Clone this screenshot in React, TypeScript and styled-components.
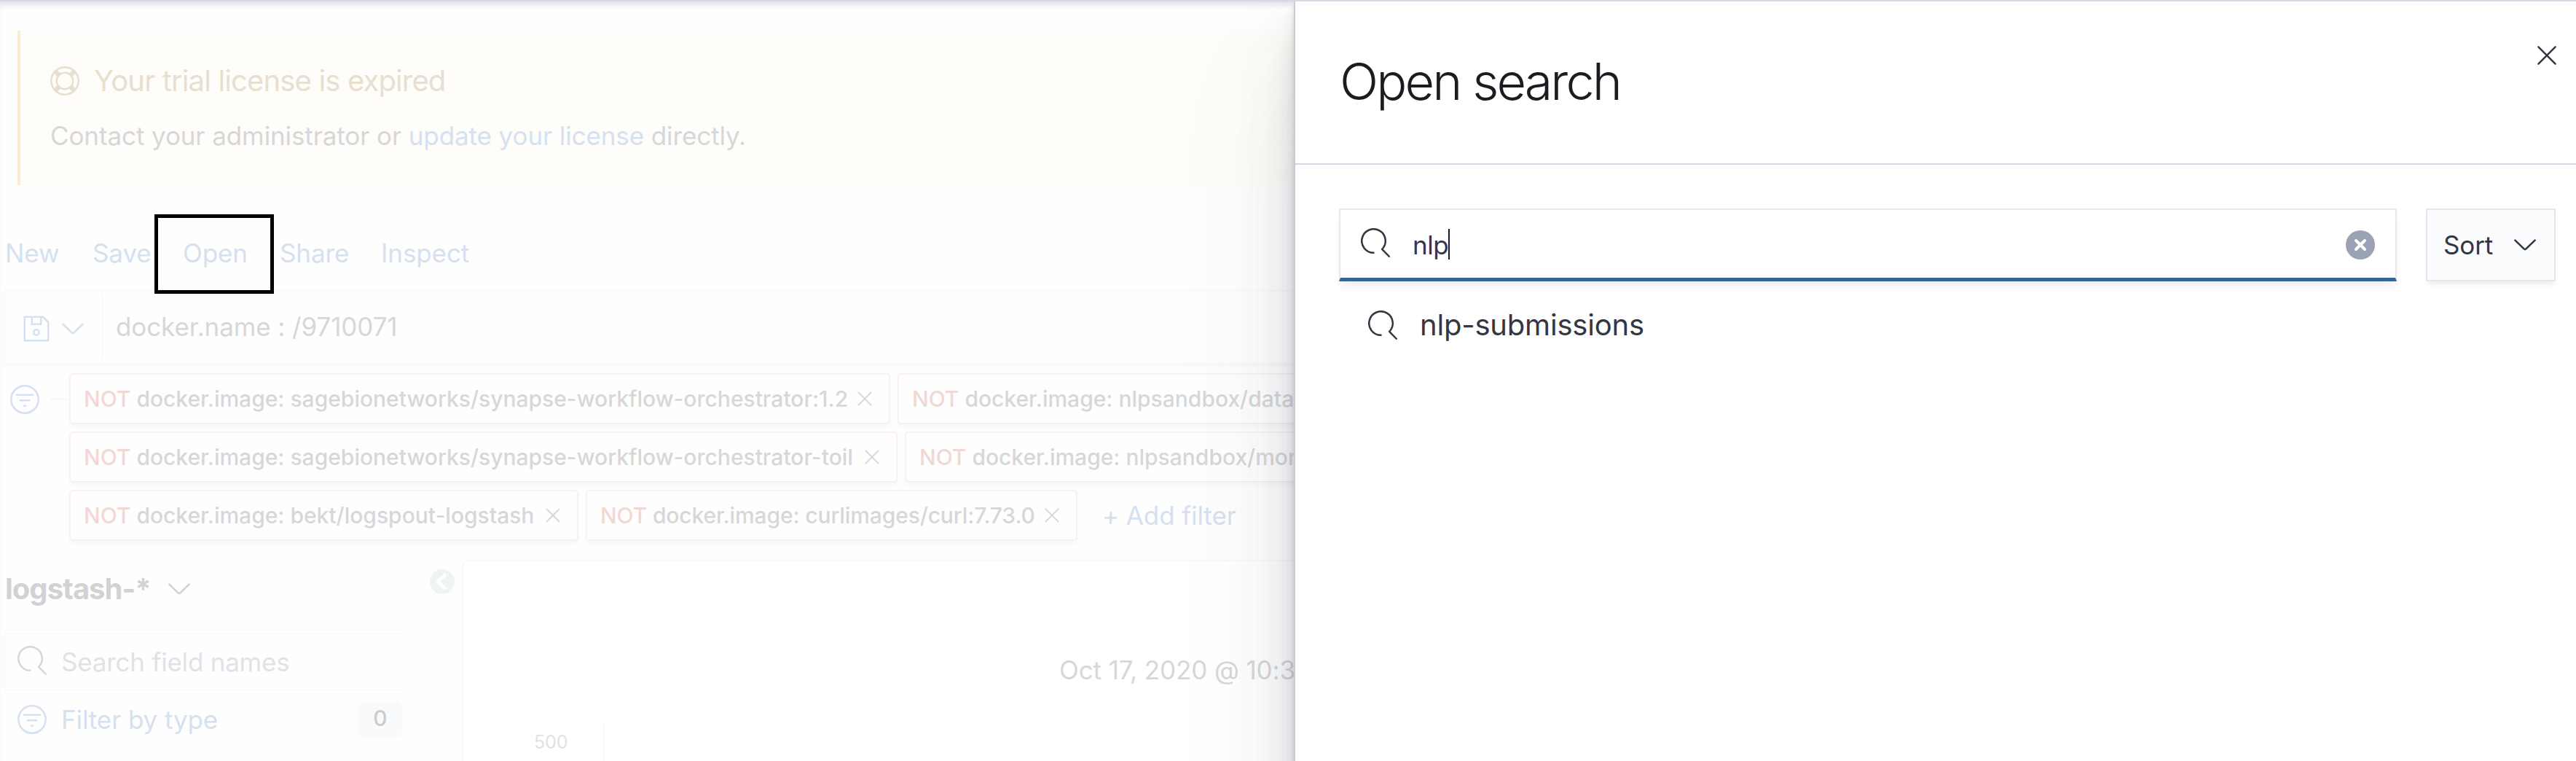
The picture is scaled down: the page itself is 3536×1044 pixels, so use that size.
import React from "react";
import styled, { createGlobalStyle, css } from "styled-components";

const link = "#d5e1f0";
const text = "#d7d7d9";
const ink = "#343741";

const GlobalStyle = createGlobalStyle`
  *, *::before, *::after { box-sizing: border-box; }
  body { margin: 0; background: #fefefe; }
  h1, h2, p, ul { margin: 0; padding: 0; font-weight: 400; }
  button { font: inherit; letter-spacing: inherit; color: inherit; background: none; border: 0; padding: 0; margin: 0; text-align: left; }
`;

const Page = styled.div`
  display: flex;
  width: 3536px;
  height: 1044px;
  overflow: hidden;
  border-top: 2px solid #d3dae6;
  background: #fefefe;
  font-family: Inter, "Liberation Sans", sans-serif;
  font-size: 35px;
  line-height: 50px;
  letter-spacing: -0.1px;
  color: ${text};
  white-space: nowrap;
`;

const Main = styled.main`
  flex: none;
  display: flex;
  flex-direction: column;
  width: 1776px;
  height: 1042px;
  overflow: hidden;
  box-shadow: inset 0 9px 8px -5px #d9dce3;
`;

const Callout = styled.section`
  flex: none;
  display: flex;
  flex-direction: column;
  gap: 25px;
  margin: 40px 0 0 24px;
  height: 212px;
  padding: 44px 0 0 41px;
  border-left: 4px solid #fbecd6;
  background: #fffdf9;
`;

const CalloutTitle = styled.h2`
  display: flex;
  align-items: center;
  gap: 20px;
  height: 50px;
  font-size: 40px;
  letter-spacing: -0.86px;
  color: #e8dfd1;
`;

const CalloutText = styled.p`
  height: 50px;
`;

const Link = styled.a`
  color: ${link};
`;

const Menu = styled.nav`
  flex: none;
  display: flex;
  position: relative;
  z-index: 1;
  height: 109px;
  margin: 40px 0 0 2px;
`;

const MenuItem = styled.button<{ $w: number; $highlight?: boolean }>`
  display: flex;
  align-items: center;
  width: ${(p) => p.$w}px;
  height: 109px;
  padding-left: 5px;
  padding-bottom: 4px;
  color: ${link};
  ${(p) =>
    p.$highlight &&
    css`
      margin-right: 3px;
      border: 5px solid #000;
      padding: 0 0 4px 34px;
    `}
`;

const QueryBar = styled.section`
  flex: none;
  display: flex;
  width: 1900px;
  height: 101px;
  margin: -5px 0 0 5px;
  border: 2px solid #f9fafb;
  box-shadow: 0 4px 5px #f8f8f9;
`;

const SavedQuery = styled.button`
  display: flex;
  align-items: center;
  width: 135px;
  margin: 3px 0;
  padding: 4px 0 0 23px;
  gap: 15px;
  border-right: 2px solid #f8f9fa;
  color: ${link};
`;

const QueryText = styled.div`
  padding: 23px 0 0 17px;
`;

const FilterBar = styled.section`
  flex: none;
  display: flex;
  height: 230px;
  margin: 13px 0 0 14px;
`;

const FilterMenu = styled.div`
  flex: none;
  display: flex;
  width: 81px;
  height: 71px;
  align-items: center;
  justify-content: space-between;
  color: ${link};
`;

const Connector = styled.div`
  width: 26px;
  height: 3px;
  background: #f8f8f9;
`;

const FilterRows = styled.div`
  display: flex;
  flex-direction: column;
  gap: 10px;
`;

const FilterRow = styled.div`
  display: flex;
  align-items: center;
  gap: 10px;
`;

const Pill = styled.div<{ $w?: number; $tracking?: number }>`
  flex: none;
  display: flex;
  align-items: center;
  justify-content: space-between;
  height: 70px;
  width: ${(p) => (p.$w ? `${p.$w}px` : "auto")};
  padding: 0 23px 0 18px;
  border: 2px solid #fbeff0;
  border-radius: 5px;
  box-shadow: 0 5px 5px #f9f9f9;
  font-size: 30px;
  font-weight: 500;
  letter-spacing: ${(p) => p.$tracking ?? 0}px;
  color: ${text};
`;

const Not = styled.span`
  color: #f1d8d5;
`;

const AddFilter = styled.button`
  margin-left: 24px;
  color: ${link};
`;

const Body = styled.div`
  flex: 1;
  display: flex;
  margin-top: 26px;
`;

const Sidebar = styled.aside`
  flex: none;
  display: flex;
  flex-direction: column;
  width: 556px;
  margin-left: 5px;
`;

const IndexPattern = styled.button`
  display: flex;
  align-items: center;
  gap: 24px;
  height: 50px;
  margin: 15px 0 0 2px;
  font-size: 40px;
  font-weight: 700;
  letter-spacing: -1px;
  color: #d1d2d4;
`;

const FieldSearch = styled.div`
  display: flex;
  align-items: center;
  gap: 20px;
  height: 80px;
  margin-top: 35px;
  padding-left: 17px;
  border: 2px solid #f9fafb;
  border-radius: 5px;
  color: #d6d7d8;
`;

const Placeholder = styled.span`
  padding-bottom: 1px;
  color: #e1e2e7;
  letter-spacing: -0.22px;
`;

const TypeFilter = styled.div`
  display: flex;
  align-items: center;
  gap: 20px;
  height: 50px;
  margin-top: 14px;
  padding: 0 9px 0 19px;
  color: ${link};
`;

const Count = styled.span`
  width: 60px;
  height: 50px;
  margin-left: auto;
  border-radius: 9px;
  background: #f9fafc;
  font-size: 30px;
  font-weight: 500;
  line-height: 47px;
  text-align: center;
  color: #cbccce;
`;

const Collapse = styled.div`
  flex: none;
  width: 34px;
  height: 34px;
  margin: 13px 10px 0 29px;
`;

const ChartPanel = styled.section`
  flex: none;
  display: flex;
  flex-direction: column;
  width: 1300px;
  border: 2px solid #f7f8f8;
  border-bottom: 0;
  border-radius: 10px 0 0 0;
  background: #fff;
`;

const ChartRange = styled.div`
  margin: 124px 0 0 818px;
`;

const ChartBody = styled.div`
  display: flex;
  flex: 1;
  margin-top: 49px;
  font-size: 25px;
  color: #e1e2e5;
`;

const Tick = styled.span`
  width: 194px;
  padding-left: 97px;
  border-right: 2px solid #fafafa;
`;

const Flyout = styled.aside`
  flex: none;
  position: relative;
  z-index: 2;
  width: 1760px;
  height: 1500px;
  border-left: 2px solid #c9ccd5;
  background: #fff;
  box-shadow:
    0 100px 160px rgba(65, 78, 101, 0.1),
    0 60px 80px rgba(65, 78, 101, 0.1),
    0 40px 40px rgba(65, 78, 101, 0.1),
    0 20px 20px rgba(65, 78, 101, 0.08),
    0 10px 10px rgba(65, 78, 101, 0.08),
    0 5px 5px rgba(65, 78, 101, 0.08);
  color: ${ink};
`;

const FlyoutHeader = styled.header`
  display: flex;
  justify-content: space-between;
  height: 224px;
  padding: 60px 27px 0 61px;
  border-bottom: 2px solid #d3dae6;
`;

const FlyoutTitle = styled.h1`
  font-size: 70px;
  font-weight: 300;
  line-height: 100px;
  letter-spacing: -2.9px;
  color: #1a1c21;
`;

const SearchRow = styled.div`
  display: flex;
  gap: 40px;
  padding: 60px 28px 0 60px;
`;

const SearchField = styled.div`
  display: flex;
  align-items: center;
  width: 1452px;
  height: 100px;
  padding: 0 28px;
  border: 2px solid #e6eaf0;
  border-bottom: 5px solid #2a68ae;
  box-shadow: 0 10px 12px -4px #ededf0;
`;

const Typed = styled.span`
  margin-left: 31px;
  padding-top: 2px;
  letter-spacing: -0.4px;
`;

const Caret = styled.span`
  width: 2px;
  height: 42px;
  margin: 1px auto 0 0;
  background: #1a1c21;
`;

const SortButton = styled.button`
  display: flex;
  align-items: center;
  gap: 29px;
  width: 178px;
  height: 100px;
  padding-left: 22px;
  border: 2px solid #e3e6ee;
  background: #fbfcfd;
  box-shadow: 0 6px 7px -2px #ececf0;
  color: ${ink};
`;

const Results = styled.ul`
  list-style: none;
  padding: 35px 0 0 100px;
`;

const Result = styled.li`
  display: flex;
  align-items: center;
  gap: 31px;
  height: 50px;
  font-size: 40px;
  letter-spacing: -0.2px;
`;

const Svg = styled.svg<{ $dy?: number }>`
  flex: none;
  display: block;
  margin-top: ${(p) => p.$dy ?? 0}px;
  fill: none;
  stroke: currentColor;
  stroke-linecap: round;
  stroke-linejoin: round;
`;

const SearchIcon = ({ dy = 0 }: { dy?: number }) => (
  <Svg $dy={dy} width="40" height="40" viewBox="0 0 16 16">
    <path d="M7 13.5A6.5 6.5 0 1 1 11.65 11.55L15.5 15.5" />
  </Svg>
);

const ChevronIcon = () => (
  <Svg width="30" height="16" viewBox="0 0 30 16" strokeWidth="2.6">
    <path d="M1.4 1.6 13.6 13.4Q15 14.8 16.4 13.4L28.6 1.6" />
  </Svg>
);

const FilterIcon = () => (
  <Svg width="40" height="40" viewBox="0 0 16 16">
    <circle cx="8" cy="8" r="7.5" />
    <path d="M3.5 5.5h9M5.5 8.5h5M7.5 11.5h1" />
  </Svg>
);

const CrossIcon = ({ size, weight, dy = 0 }: { size: number; weight: number; dy?: number }) => (
  <Svg $dy={dy} width={size} height={size} viewBox={`0 0 ${size} ${size}`} strokeWidth={weight}>
    <path d={`M1.4 1.4 ${size - 1.4} ${size - 1.4}M${size - 1.4} 1.4 1.4 ${size - 1.4}`} />
  </Svg>
);

const HelpIcon = () => (
  <Svg width="40" height="40" viewBox="0 0 16 16">
    <circle cx="8" cy="8" r="7.5" />
    <circle cx="8" cy="8" r="4.5" />
    <path
      d="M4.7 4.7 3 3M11.3 4.7 13 3M4.7 11.3 3 13M11.3 11.3 13 13"
      strokeWidth="2.6"
      strokeLinecap="butt"
    />
  </Svg>
);

const SaveIcon = () => (
  <Svg width="40" height="40" viewBox="0 0 16 16">
    <path d="M1.5 1.5h10.1l2.9 2.9v10.1h-13zM5.5 1.8V5.5h5V1.8" />
    <circle cx="8" cy="10" r="1.5" />
  </Svg>
);

const ClearIcon = () => (
  <Svg width="40" height="40" viewBox="0 0 40 40" $dy={3}>
    <circle cx="20" cy="20" r="20" fill="#9aa2b3" stroke="none" />
    <path d="M14 14 26 26M26 14 14 26" stroke="#fff" strokeWidth="4" />
  </Svg>
);

const CollapseIcon = () => (
  <Svg width="34" height="34" viewBox="0 0 34 34">
    <circle cx="17" cy="17" r="17" fill="#f0f3f3" stroke="none" />
    <path d="M20.5 8 11 17 20.5 26" stroke="#fff" strokeWidth="4.5" />
  </Svg>
);

const filters: { label: string; width?: number; tracking?: number }[][] = [
  [
    { label: "docker.image: sagebionetworks/synapse-workflow-orchestrator:1.2", width: 1127 },
    { label: "docker.image: nlpsandbox/data-node" },
  ],
  [
    { label: "docker.image: sagebionetworks/synapse-workflow-orchestrator-toil", width: 1137 },
    { label: "docker.image: nlpsandbox/mongo" },
  ],
  [
    { label: "docker.image: bekt/logspout-logstash", width: 699 },
    { label: "docker.image: curlimages/curl:7.73.0", width: 675, tracking: -0.12 },
  ],
];

export default function App() {
  return (
    <>
      <GlobalStyle />
      <Page>
        <Main>
          <Callout>
            <CalloutTitle>
              <HelpIcon />
              Your trial license is expired
            </CalloutTitle>
            <CalloutText>
              Contact your administrator or <Link>update your license</Link> directly.
            </CalloutText>
          </Callout>
          <Menu>
            <MenuItem $w={120}>New</MenuItem>
            <MenuItem $w={90}>Save</MenuItem>
            <MenuItem $w={164} $highlight>Open</MenuItem>
            <MenuItem $w={139}>Share</MenuItem>
            <MenuItem $w={140}>Inspect</MenuItem>
          </Menu>
          <QueryBar>
            <SavedQuery>
              <SaveIcon />
              <ChevronIcon />
            </SavedQuery>
            <QueryText>docker.name : /9710071</QueryText>
          </QueryBar>
          <FilterBar>
            <FilterMenu>
              <FilterIcon />
              <Connector />
            </FilterMenu>
            <FilterRows>
              {filters.map((row, i) => (
                <FilterRow key={i}>
                  {row.map((f) => (
                    <Pill key={f.label} $w={f.width} $tracking={f.tracking}>
                      <span>
                        <Not>NOT</Not> {f.label}
                      </span>
                      <CrossIcon size={20} weight={2} />
                    </Pill>
                  ))}
                  {i === 2 && <AddFilter>+ Add filter</AddFilter>}
                </FilterRow>
              ))}
            </FilterRows>
          </FilterBar>
          <Body>
            <Sidebar>
              <IndexPattern>
                logstash-*
                <ChevronIcon />
              </IndexPattern>
              <FieldSearch>
                <SearchIcon dy={-4} />
                <Placeholder>Search field names</Placeholder>
              </FieldSearch>
              <TypeFilter>
                <FilterIcon />
                Filter by type
                <Count>0</Count>
              </TypeFilter>
            </Sidebar>
            <Collapse>
              <CollapseIcon />
            </Collapse>
            <ChartPanel>
              <ChartRange>Oct 17, 2020 @ 10:34:27</ChartRange>
              <ChartBody>
                <Tick>500</Tick>
              </ChartBody>
            </ChartPanel>
          </Body>
        </Main>
        <Flyout>
          <FlyoutHeader>
            <FlyoutTitle>Open search</FlyoutTitle>
            <CrossIcon size={26} weight={2.5} dy={1} />
          </FlyoutHeader>
          <SearchRow>
            <SearchField>
              <SearchIcon dy={-3} />
              <Typed>nlp</Typed>
              <Caret />
              <ClearIcon />
            </SearchField>
            <SortButton>
              Sort
              <ChevronIcon />
            </SortButton>
          </SearchRow>
          <Results>
            <Result>
              <SearchIcon />
              nlp-submissions
            </Result>
          </Results>
        </Flyout>
      </Page>
    </>
  );
}
